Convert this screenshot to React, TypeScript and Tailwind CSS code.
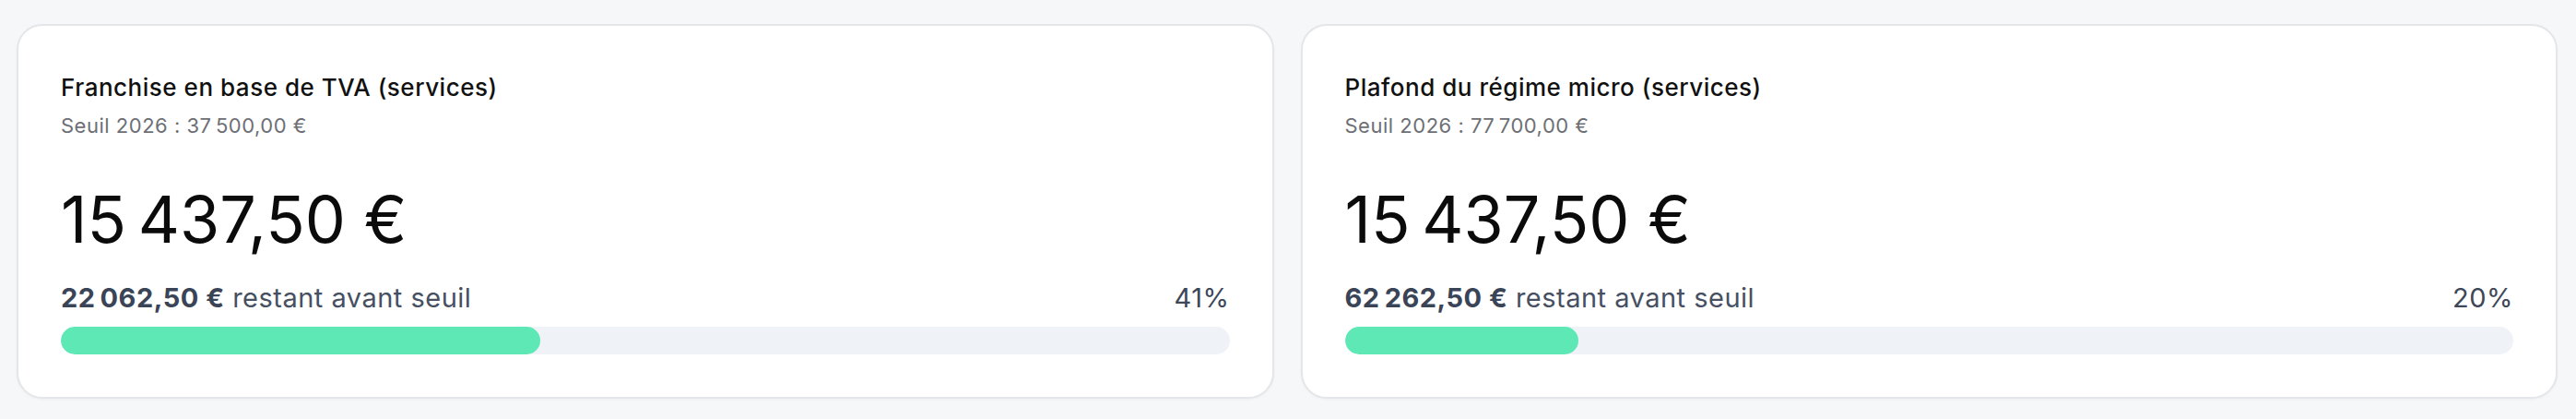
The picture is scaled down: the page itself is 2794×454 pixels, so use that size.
import React from 'react'

type Seuil = {
  title: string
  seuil: string
  montant: string
  restant: string
  pct: number
}

const seuils: Seuil[] = [
  {
    title: 'Franchise en base de TVA (services)',
    seuil: 'Seuil 2026\u00a0: 37\u202f500,00\u00a0€',
    montant: '15\u202f437,50\u00a0€',
    restant: '22\u202f062,50\u00a0€',
    pct: 41,
  },
  {
    title: 'Plafond du régime micro (services)',
    seuil: 'Seuil 2026\u00a0: 77\u202f700,00\u00a0€',
    montant: '15\u202f437,50\u00a0€',
    restant: '62\u202f262,50\u00a0€',
    pct: 20,
  },
]

const SeuilCard: React.FC<{ item: Seuil }> = ({ item }) => {
  return (
    <div className="flex flex-col rounded-[28px] border-2 border-[#e4e6ea] bg-white px-[46px] pt-[49px] pb-[46px] shadow-[0_1px_3px_rgba(0,0,0,0.04)]">
      <h2 className="text-[26px] leading-[36px] font-medium tracking-[0.02em] text-[#111111]">
        {item.title}
      </h2>
      <p className="mt-2 text-[22px] leading-[30px] tracking-[0.023em] text-[#6d6f75]">
        {item.seuil}
      </p>
      <p className="mt-[52px] text-[70px] leading-none font-normal tracking-[-0.03em] text-[#0b0b0b]">
        {item.montant}
      </p>
      <div className="mt-[30px] flex items-center justify-between text-[29px] leading-[40px] tracking-[0.017em] text-[#465062]">
        <span>
          <span className="font-bold text-[#3a4457]">{item.restant}</span>{' '}
          restant avant seuil
        </span>
        <span className="text-[#3d4758]">{item.pct}%</span>
      </div>
      <div className="mt-[11px] h-[30px] w-full overflow-hidden rounded-full bg-[#eff2f6]">
        <div
          className="h-full rounded-full bg-[#5de8b6]"
          style={{ width: `${item.pct}%` }}
        />
      </div>
    </div>
  )
}

const App: React.FC = () => {
  return (
    <div className="min-h-[454px] bg-[#f6f7f9] pt-[26px] pr-[20px] pb-[23px] pl-[18px] font-['Inter',sans-serif]">
      <div className="grid grid-cols-2 gap-[29px]">
        {seuils.map((s) => (
          <SeuilCard key={s.title} item={s} />
        ))}
      </div>
    </div>
  )
}

export default App
